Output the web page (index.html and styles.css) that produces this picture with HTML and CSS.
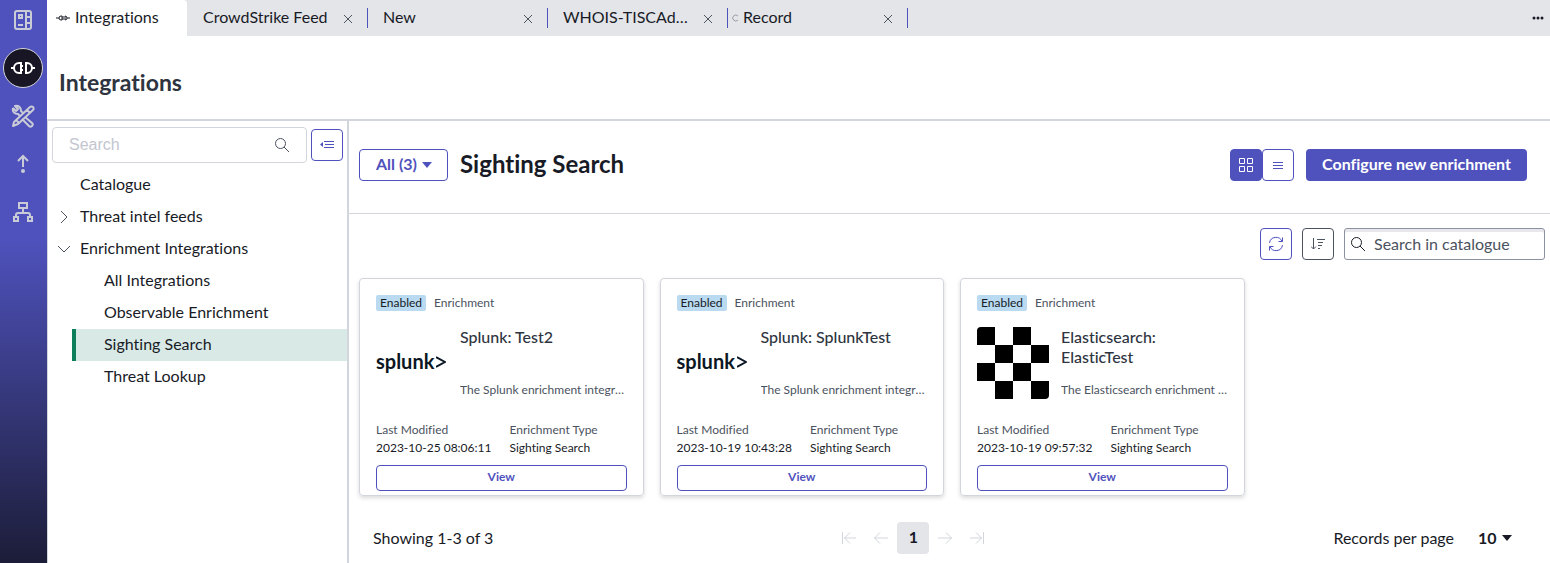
FILE: index.html
```html
<!DOCTYPE html>
<html lang="en">
<head>
    <meta charset="UTF-8">
    <meta name="viewport" content="width=device-width, initial-scale=1.0">
    <title>Integrations</title>
    <link rel="stylesheet" href="styles.css">
</head>
<body>
    <nav class="rail" aria-label="Workspace">
        <a href="#" class="rail-item" aria-label="Lists">
            <svg width="20" height="22" viewBox="0 0 20 22" fill="none" stroke="currentColor" stroke-width="2">
                <rect x="2" y="2" width="16" height="18" rx="2"/>
                <path d="M13 2v18M13 8h5M13 14h5M5 16h5"/>
                <rect x="6" y="6" width="3" height="3" stroke-width="2"/>
            </svg>
        </a>
        <a href="#" class="rail-item active" aria-label="Integrations">
            <svg width="24" height="16" viewBox="0 0 24 16" fill="none" stroke="currentColor" stroke-width="2">
                <path d="M0 8h4M10 3H8a5 5 0 0 0 0 10h2zM10 6h2M10 10h2M15 3h1a5 5 0 0 1 0 10h-1zM20 8h4"/>
            </svg>
        </a>
        <a href="#" class="rail-item" aria-label="Tools">
            <svg width="24" height="24" viewBox="0 0 24 24" fill="none" stroke="currentColor" stroke-width="2" stroke-linejoin="round">
                <path d="M2 4l3 3 2-2-3-3c3-1 6 1 6 5l2 2M14 13l7 6a2 2 0 0 1-3 3l-7-7M9 12l-2-2c-3 0-6-2-5-6"/>
                <path d="M2 22l1-4L19 3a2 2 0 0 1 3 3L7 20zM16 6l3 3M5 16l3 3"/>
            </svg>
        </a>
        <a href="#" class="rail-item" aria-label="Escalations">
            <svg width="12" height="20" viewBox="0 0 12 20" fill="none" stroke="currentColor" stroke-width="2">
                <path d="M6 13V2M1 7l5-5 5 5"/>
                <circle cx="6" cy="17" r="2" fill="currentColor" stroke="none"/>
            </svg>
        </a>
        <a href="#" class="rail-item" aria-label="Hierarchy">
            <svg width="22" height="22" viewBox="0 0 22 22" fill="none" stroke="currentColor" stroke-width="2">
                <rect x="7" y="2" width="8" height="5"/>
                <path d="M11 7v5M4 16v-2q0-2 2-2h10q2 0 2 2v2"/>
                <rect x="2" y="16" width="4" height="4"/>
                <rect x="16" y="16" width="4" height="4"/>
            </svg>
        </a>
    </nav>

    <div class="workspace">
        <div class="tabs">
            <div class="tab active">
                <svg class="tab-icon" width="14" height="8" viewBox="0 0 14 8" fill="none" stroke="currentColor">
                    <path d="M0 4h3M6 2H5a2 2 0 0 0 0 4h1zM6 3h2M6 5h2M9 2a2 2 0 0 1 0 4zM11 4h3"/>
                </svg>
                <a href="#">Integrations</a>
            </div>
            <div class="tab">
                <a href="#">CrowdStrike Feed</a>
                <button class="close" aria-label="Close CrowdStrike Feed"><svg width="8" height="8" viewBox="0 0 8 8" stroke="currentColor"><path d="M0 0l8 8M8 0l-8 8"/></svg></button>
            </div>
            <div class="tab">
                <a href="#">New</a>
                <button class="close" aria-label="Close New"><svg width="8" height="8" viewBox="0 0 8 8" stroke="currentColor"><path d="M0 0l8 8M8 0l-8 8"/></svg></button>
            </div>
            <div class="tab">
                <a href="#">WHOIS-TISCAdmin</a>
                <button class="close" aria-label="Close WHOIS-TISCAdmin"><svg width="8" height="8" viewBox="0 0 8 8" stroke="currentColor"><path d="M0 0l8 8M8 0l-8 8"/></svg></button>
            </div>
            <div class="tab loading">
                <svg class="spinner" width="8" height="8" viewBox="0 0 8 8" fill="none" stroke="currentColor"><path d="M7 2a3 3 0 1 0 0 4"/></svg>
                <a href="#">Record</a>
                <button class="close" aria-label="Close Record"><svg width="8" height="8" viewBox="0 0 8 8" stroke="currentColor"><path d="M0 0l8 8M8 0l-8 8"/></svg></button>
            </div>
            <button class="tabs-more" aria-label="More tabs">
                <svg width="12" height="4" viewBox="0 0 12 4" fill="currentColor"><circle cx="2" cy="2" r="1.5"/><circle cx="6" cy="2" r="1.5"/><circle cx="10" cy="2" r="1.5"/></svg>
            </button>
        </div>

        <header class="page-header">
            <h1>Integrations</h1>
        </header>

        <div class="columns">
            <aside class="sidebar">
                <div class="sidebar-search">
                    <div class="search-box">
                        <input type="text" placeholder="Search" aria-label="Search">
                        <svg width="16" height="16" viewBox="0 0 16 16" fill="none" stroke="currentColor"><circle cx="6.5" cy="6.5" r="5"/><path d="M10 10l5 5"/></svg>
                    </div>
                    <button class="icon-button" aria-label="Collapse list">
                        <svg width="14" height="10" viewBox="0 0 14 10" fill="none" stroke="currentColor"><path d="M4 1.5h10M5 4.5h9M4 7.5h10"/><path d="M3 2v5L0 4.500z" fill="currentColor" stroke="none"/></svg>
                    </button>
                </div>
                <ul class="tree">
                    <li><a href="#">Catalogue</a></li>
                    <li>
                        <a href="#"><svg width="14" height="14" viewBox="0 0 14 14" fill="none" stroke="currentColor"><path d="M4 1l6 6-6 6"/></svg>Threat intel feeds</a>
                    </li>
                    <li>
                        <a href="#"><svg width="14" height="14" viewBox="0 0 14 14" fill="none" stroke="currentColor"><path d="M1 4l6 6 6-6"/></svg>Enrichment Integrations</a>
                        <ul class="subtree">
                            <li><a href="#">All Integrations</a></li>
                            <li><a href="#">Observable Enrichment</a></li>
                            <li><a href="#" class="selected">Sighting Search</a></li>
                            <li><a href="#">Threat Lookup</a></li>
                        </ul>
                    </li>
                </ul>
            </aside>

            <main class="content">
                <div class="content-header">
                    <div class="dropdown filter">
                        <select aria-label="Filter">
                            <option>All (3)</option>
                        </select>
                    </div>
                    <h2>Sighting Search</h2>
                    <div class="view-toggle">
                        <button class="icon-button on" aria-label="Card view">
                            <svg width="14" height="14" viewBox="0 0 14 14" fill="none" stroke="currentColor"><path d="M.5.5h5v5h-5zM8.500.5h5v5h-5zM.5 8.500h5v5h-5zM8.500 8.500h5v5h-5z"/></svg>
                        </button>
                        <button class="icon-button" aria-label="List view">
                            <svg width="10" height="9" viewBox="0 0 10 9" stroke="currentColor"><path d="M0 1.500h10M0 4.500h10M0 7.500h10"/></svg>
                        </button>
                    </div>
                    <button class="primary">Configure new enrichment</button>
                </div>

                <div class="toolbar">
                    <button class="icon-button" aria-label="Refresh">
                        <svg width="16" height="16" viewBox="0 0 16 16" fill="none" stroke="currentColor"><path d="M1.500 7A6.500 6.500 0 0 1 14 5.500M14.500 1.500v4h-4M14.500 9A6.500 6.500 0 0 1 2 10.500M1.500 14.500v-4h4"/></svg>
                    </button>
                    <button class="icon-button dark" aria-label="Sort">
                        <svg width="14" height="14" viewBox="0 0 14 14" fill="none" stroke="currentColor"><path d="M2.500 1v11M0 9.500l2.500 2.500L5 9.500M6 2.500h8M7 5.500h5M7 8.500h4M7 11.500h2"/></svg>
                    </button>
                    <div class="catalogue-search">
                        <svg width="16" height="16" viewBox="0 0 16 16" fill="none" stroke="currentColor"><circle cx="6.500" cy="6.500" r="5"/><path d="M10 10l5 5"/></svg>
                        <input type="text" placeholder="Search in catalogue" aria-label="Search in catalogue">
                    </div>
                </div>

                <div class="cards">
                    <article class="card">
                        <div class="card-top"><span class="badge">Enabled</span><span>Enrichment</span></div>
                        <div class="card-body">
                            <div class="logo splunk">splunk<svg width="10" height="14" viewBox="0 0 10 14" fill="none" stroke="currentColor" stroke-width="2"><path d="M0 3l9 5-9 5"/></svg></div>
                            <div class="card-text">
                                <h3>Splunk: Test2</h3>
                                <p>The Splunk enrichment integration</p>
                            </div>
                        </div>
                        <dl>
                            <div><dt>Last Modified</dt><dd>2023-10-25 08:06:11</dd></div>
                            <div><dt>Enrichment Type</dt><dd>Sighting Search</dd></div>
                        </dl>
                        <button class="view">View</button>
                    </article>

                    <article class="card">
                        <div class="card-top"><span class="badge">Enabled</span><span>Enrichment</span></div>
                        <div class="card-body">
                            <div class="logo splunk">splunk<svg width="10" height="14" viewBox="0 0 10 14" fill="none" stroke="currentColor" stroke-width="2"><path d="M0 3l9 5-9 5"/></svg></div>
                            <div class="card-text">
                                <h3>Splunk: SplunkTest</h3>
                                <p>The Splunk enrichment integration</p>
                            </div>
                        </div>
                        <dl>
                            <div><dt>Last Modified</dt><dd>2023-10-19 10:43:28</dd></div>
                            <div><dt>Enrichment Type</dt><dd>Sighting Search</dd></div>
                        </dl>
                        <button class="view">View</button>
                    </article>

                    <article class="card">
                        <div class="card-top"><span class="badge">Enabled</span><span>Enrichment</span></div>
                        <div class="card-body">
                            <div class="logo checker"></div>
                            <div class="card-text">
                                <h3>Elasticsearch: ElasticTest</h3>
                                <p>The Elasticsearch enrichment integration</p>
                            </div>
                        </div>
                        <dl>
                            <div><dt>Last Modified</dt><dd>2023-10-19 09:57:32</dd></div>
                            <div><dt>Enrichment Type</dt><dd>Sighting Search</dd></div>
                        </dl>
                        <button class="view">View</button>
                    </article>
                </div>

                <footer class="pagination">
                    <span>Showing 1-3 of 3</span>
                    <div class="pages">
                        <button disabled aria-label="First page"><svg width="16" height="14" viewBox="0 0 16 14" fill="none" stroke="currentColor"><path d="M1.500 1v12M3 7h12M9 1.500L3.500 7 9 12.500"/></svg></button>
                        <button disabled aria-label="Previous page"><svg width="16" height="14" viewBox="0 0 16 14" fill="none" stroke="currentColor"><path d="M1 7h14M7 1.500L1.500 7 7 12.500"/></svg></button>
                        <button class="current">1</button>
                        <button disabled aria-label="Next page"><svg width="16" height="14" viewBox="0 0 16 14" fill="none" stroke="currentColor"><path d="M1 7h14M9 1.500L14.500 7 9 12.500"/></svg></button>
                        <button disabled aria-label="Last page"><svg width="16" height="14" viewBox="0 0 16 14" fill="none" stroke="currentColor"><path d="M14.500 1v12M1 7h12M7 1.500L12.500 7 7 12.500"/></svg></button>
                    </div>
                    <div class="per-page">
                        <label for="per-page">Records per page</label>
                        <div class="dropdown">
                            <select id="per-page">
                                <option>10</option>
                            </select>
                        </div>
                    </div>
                </footer>
            </main>
        </div>
    </div>
</body>
</html>
```

FILE: styles.css
```css
:root {
    --brand: #4f52bd;
    --ink: #181b26;
    --ink-soft: #2e3440;
    --muted: #4b5260;
    --line: #d3d5dc;
    --tabbar: #e4e5e9;
}

* {
    box-sizing: border-box;
}

body {
    margin: 0;
    display: flex;
    min-height: 100vh;
    background: white;
    color: var(--ink);
    font-family: Lato, sans-serif;
    font-size: 16px;
    font-variant-ligatures: none;
    line-height: 20px;
}

a {
    color: inherit;
    text-decoration: none;
}

button, input, select {
    font: inherit;
    font-variant-ligatures: none;
    color: inherit;
}

button {
    display: flex;
    align-items: center;
    justify-content: center;
    padding: 0;
    border: 0;
    background: none;
    cursor: pointer;
}

svg {
    flex: none;
}

h1, h2, h3, p, ul, dl, dd {
    margin: 0;
    padding: 0;
}

/* left rail */
.rail {
    flex: none;
    width: 47px;
    display: flex;
    flex-direction: column;
    gap: 8px;
    padding-left: 3px;
    background: linear-gradient(#4f52bd 0, #4f52bd 42%, #1c1d38 100%);
}

.rail-item {
    width: 40px;
    height: 40px;
    display: flex;
    align-items: center;
    justify-content: center;
    color: #c9cbd6;
}

.rail-item.active {
    border: 1px solid #d3d5dc;
    border-radius: 50%;
    background: #181624;
    color: white;
}

.workspace {
    flex: 1;
    min-width: 0;
    display: flex;
    flex-direction: column;
}

/* tabs */
.tabs {
    display: flex;
    height: 36px;
    background: var(--tabbar);
}

.tab {
    width: 180px;
    display: flex;
    align-items: center;
    padding: 0 16px 0 15px;
    background: linear-gradient(var(--brand), var(--brand)) right center / 1px 20px no-repeat;
}

.tab:nth-child(2) {
    width: 181px;
    padding-left: 16px;
}

.tab a {
    flex: 1;
    padding-bottom: 2px;
    overflow: hidden;
    text-overflow: ellipsis;
    white-space: nowrap;
}

.tab.active {
    width: 140px;
    padding: 0 9px;
    gap: 5px;
    background: white;
    border-radius: 0 4px 0 0;
}

.tab.loading {
    padding-left: 3px;
    gap: 4px;
}

.spinner {
    color: #9a9ca8;
}

.close {
    width: 8px;
    height: 20px;
    margin-left: 16px;
    padding-top: 2px;
    color: var(--muted);
}

.tab.loading .close {
    margin-left: 12px;
}

.tabs-more {
    margin-left: auto;
    width: 24px;
}

.page-header {
    padding: 32px 12px 22px;
    border-bottom: 2px solid var(--line);
}

.page-header h1 {
    color: var(--ink-soft);
    font-size: 23px;
    line-height: 29px;
}

.columns {
    flex: 1;
    display: flex;
}

/* tree navigation */
.sidebar {
    flex: none;
    width: 302px;
    border-left: 1px solid var(--line);
    border-right: 2px solid var(--line);
}

.sidebar-search {
    display: flex;
    align-items: center;
    gap: 4px;
    padding: 6px 4px;
}

.search-box {
    flex: 1;
    min-width: 0;
    height: 36px;
    display: flex;
    align-items: center;
    padding: 0 16px;
    border: 1px solid var(--line);
    border-radius: 4px;
    color: var(--muted);
}

.search-box input,
.catalogue-search input {
    flex: 1;
    min-width: 0;
    padding: 0;
    border: 0;
    outline: 0;
    background: none;
}

.search-box input {
    font-family: "Liberation Sans", sans-serif;
}

.search-box input::placeholder {
    color: #c3c6d0;
}

.icon-button {
    width: 32px;
    height: 32px;
    border: 1px solid var(--brand);
    border-radius: 4px;
    color: var(--brand);
}

.icon-button.on {
    background: var(--brand);
    color: white;
}

.icon-button.dark {
    border-color: var(--muted);
    color: var(--muted);
}

.tree, .subtree {
    list-style: none;
}

.tree a {
    height: 32px;
    display: flex;
    align-items: center;
    padding: 0 0 2px 32px;
}

.tree svg {
    margin: 2px 9px 0 -23px;
    color: var(--muted);
}

.subtree {
    margin-left: 24px;
}

.subtree .selected {
    padding-left: 28px;
    border-left: 4px solid #0e7f5a;
    background: #d9eae6;
}

/* content */
.content {
    flex: 1;
    min-width: 0;
}

.content-header {
    display: flex;
    align-items: center;
    gap: 12px;
    padding: 28px 23px 32px 10px;
    border-bottom: 1px solid var(--line);
}

.content-header h2 {
    flex: 1;
    padding-bottom: 2px;
    font-size: 24px;
    line-height: 30px;
}

.dropdown {
    display: flex;
    align-items: center;
    gap: 5px;
    font-weight: 700;
}

.dropdown select {
    appearance: none;
    padding: 0;
    border: 0;
    outline: 0;
    background: none;
}

.dropdown::after {
    content: "";
    border: 5px solid transparent;
    border-top: 6px solid currentColor;
    border-bottom: 0;
}

.filter {
    height: 32px;
    padding: 0 15px 0 16px;
    border: 1px solid var(--brand);
    border-radius: 4px;
    color: var(--brand);
}

.filter select {
    padding-bottom: 2px;
}

.view-toggle {
    display: flex;
}

.primary {
    height: 32px;
    padding: 0 16px 2px;
    border-radius: 4px;
    background: var(--brand);
    color: white;
    font-weight: 700;
}

.toolbar {
    display: flex;
    justify-content: flex-end;
    gap: 10px;
    padding: 14px 5px 18px;
}

.catalogue-search {
    width: 201px;
    display: flex;
    align-items: center;
    gap: 8px;
    padding: 0 5px;
    border: 1px solid #8d909e;
    border-radius: 3px;
    box-shadow: inset 0 3px 0 #e8e8ec;
}

.catalogue-search input::placeholder {
    color: var(--muted);
}

/* cards */
.cards {
    display: grid;
    grid-template-columns: repeat(auto-fill, minmax(280px, 1fr));
    gap: 16px;
    padding: 0 5px 0 10px;
}

.card {
    padding: 15px 16px 4px;
    border: 1px solid var(--line);
    border-radius: 4px;
    box-shadow: 0 2px 4px rgba(0, 0, 0, 0.15);
    color: var(--muted);
    font-size: 12px;
    line-height: 18px;
}

.card-top {
    display: flex;
    align-items: center;
    gap: 8px;
}

.badge {
    padding: 0 4px;
    border-radius: 2px;
    background: #b9daf1;
    color: var(--ink);
    line-height: 16px;
}

.card-body {
    display: flex;
    gap: 12px;
    margin: 15px 0 22px;
}

.logo {
    flex: none;
    width: 72px;
    height: 72px;
}

.splunk {
    display: flex;
    align-items: center;
    gap: 2px;
    padding-bottom: 4px;
    color: #0c1724;
    font-size: 20px;
    font-weight: 700;
}

.checker {
    border-radius: 4px;
    background: repeating-conic-gradient(white 0 25%, black 0 50%) 0 0 / 36px 36px;
}

.card-text {
    flex: 1;
    min-width: 0;
    display: flex;
    flex-direction: column;
    justify-content: space-between;
}

.card-text h3 {
    color: var(--ink-soft);
    font-size: 16px;
    font-weight: 500;
    line-height: 20px;
}

.card-text p {
    overflow: hidden;
    text-overflow: ellipsis;
    white-space: nowrap;
}

.card dl {
    display: flex;
    gap: 18px;
    margin-bottom: 8px;
}

.card dd {
    color: var(--ink);
}

.view {
    width: 100%;
    height: 26px;
    padding-bottom: 2px;
    border: 1px solid var(--brand);
    border-radius: 4px;
    color: var(--brand);
    font-size: 12px;
    font-weight: 700;
}

/* pagination */
.pagination {
    display: flex;
    align-items: center;
    justify-content: space-between;
    padding: 26px 38px 8px 24px;
}

.pages {
    display: flex;
}

.pages button {
    width: 32px;
    height: 32px;
    border-radius: 4px;
    color: var(--line);
}

.pages .current {
    padding-bottom: 2px;
    background: var(--tabbar);
    color: var(--ink);
    font-weight: 700;
}

.per-page {
    display: flex;
    gap: 24px;
}
```
